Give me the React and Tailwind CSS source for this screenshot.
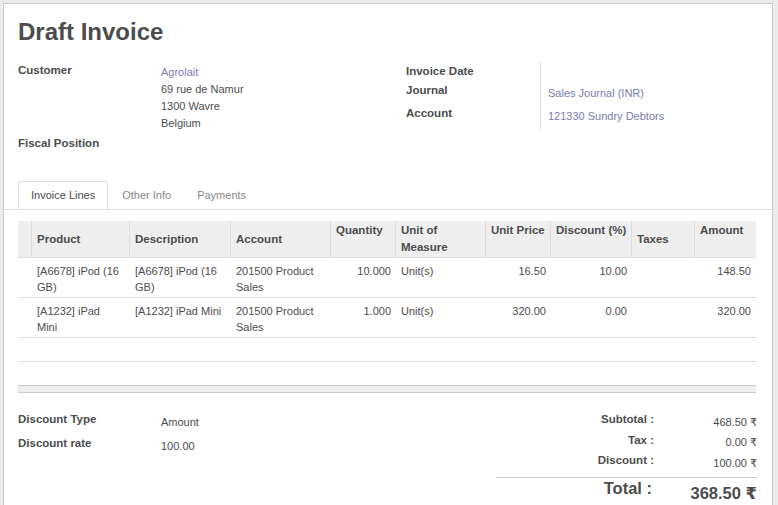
const font = { fontFamily: '"Liberation Sans", "DejaVu Sans", Arial, sans-serif' };

const columns = [
  { key: 'handle', label: '', width: 'w-[13px]' },
  { key: 'product', label: 'Product', width: 'w-[98px]', middle: true },
  { key: 'description', label: 'Description', width: 'w-[101px]', middle: true },
  { key: 'account', label: 'Account', width: 'w-[100px]', middle: true },
  { key: 'quantity', label: 'Quantity', width: 'w-[65px]', right: true },
  { key: 'uom', label: 'Unit of Measure', width: 'w-[90px]', wrap: true },
  { key: 'price', label: 'Unit Price', width: 'w-[65px]', right: true },
  { key: 'discount', label: 'Discount (%)', width: 'w-[81px]', right: true },
  { key: 'taxes', label: 'Taxes', width: 'w-[63px]', middle: true },
  { key: 'amount', label: 'Amount', width: 'w-[61px]', right: true },
];

const lines = [
  {
    product: '[A6678] iPod (16 GB)',
    description: '[A6678] iPod (16 GB)',
    account: '201500 Product Sales',
    quantity: '10.000',
    uom: 'Unit(s)',
    price: '16.50',
    discount: '10.00',
    taxes: '',
    amount: '148.50',
  },
  {
    product: '[A1232] iPad Mini',
    description: '[A1232] iPad Mini',
    account: '201500 Product Sales',
    quantity: '1.000',
    uom: 'Unit(s)',
    price: '320.00',
    discount: '0.00',
    taxes: '',
    amount: '320.00',
  },
];

function HeaderCell({ col, first }) {
  return (
    <div
      className={`${col.width} shrink-0 flex ${col.middle ? 'items-center' : 'items-start pt-[1px]'} ${
        first ? '' : 'border-l border-[#dcdcdc]'
      } ${col.wrap ? '' : 'whitespace-nowrap'} px-[5px] text-[11.5px] font-bold leading-[17px]`}
    >
      {col.label}
    </div>
  );
}

function LineRow({ line }) {
  return (
    <div className="flex border-b border-[#dcdcdc] pt-[5px] pb-[2px] text-[11px] leading-[16px]">
      {columns.map((col) => (
        <div
          key={col.key}
          className={`${col.width} shrink-0 ${col.right ? 'text-right pr-[4px] pl-[6px]' : 'px-[6px]'}`}
        >
          {col.key === 'handle' ? '' : line[col.key]}
        </div>
      ))}
    </div>
  );
}

function TotalRow({ label, value, h, valuePad }) {
  return (
    <div className={`flex ${h}`}>
      <div className="w-[160px] text-right pr-[2px] text-[11.5px] font-bold leading-[17px]">{label}</div>
      <div className={`w-[101px] text-right text-[11px] leading-[17px] ${valuePad}`}>{value}</div>
    </div>
  );
}

export default function App() {
  return (
    <div className="min-h-[505px] bg-[#ebebeb] pl-[3px] pt-[3px] overflow-hidden" style={font}>
      <div className="w-[770px] h-[520px] bg-white border border-[#cbcad4] text-[#4c4c4c]">
        {/* header */}
        <div className="pl-[14px] pr-[16px] pt-[14px]">
          <h1 className="text-[24px] font-bold leading-[28px] text-[#4c4c4c]">Draft Invoice</h1>

          <div className="flex mt-[16px]">
            <div className="w-[388px] flex flex-col">
              <div className="flex">
                <div className="w-[143px] text-[11.5px] font-bold leading-[17px]">Customer</div>
                <div className="pt-[2px] text-[11px] leading-[17px]">
                  <div className="text-[#7c7bad]">Agrolait</div>
                  <div>69 rue de Namur</div>
                  <div>1300 Wavre</div>
                  <div>Belgium</div>
                </div>
              </div>
              <div className="mt-[3px] text-[11.5px] font-bold leading-[17px]">Fiscal Position</div>
            </div>

            <div className="flex">
              <div className="w-[134px] flex flex-col text-[11.5px] font-bold leading-[17px]">
                <div className="h-[20px] pt-[1px]">Invoice Date</div>
                <div className="h-[23px]">Journal</div>
                <div className="h-[24px]">Account</div>
              </div>
              <div className="h-[67px] border-l border-[#dcdcdc] pl-[7px] flex flex-col text-[11px] leading-[17px] text-[#7c7bad]">
                <div className="h-[20px]"></div>
                <div className="h-[23px] pt-[3px]">Sales Journal (INR)</div>
                <div className="h-[24px] pt-[3px]">121330 Sundry Debtors</div>
              </div>
            </div>
          </div>
        </div>

        {/* tabs */}
        <div className="mt-[29px] flex gap-[2px] pl-[14px] border-b border-[#dcdcdc] text-[11px]">
          <div className="h-[28px] -mb-[1px] px-[12px] flex items-center bg-white border border-b-0 border-[#dcdcdc] rounded-t-[3px] text-[#4c4c4c]">
            Invoice Lines
          </div>
          <div className="h-[28px] px-[12px] flex items-center text-[#888888]">Other Info</div>
          <div className="h-[28px] px-[12px] flex items-center text-[#888888]">Payments</div>
        </div>

        {/* lines table */}
        <div className="pl-[14px] pr-[16px] pt-[11px]">
          <div className="flex h-[37px] bg-[#eeeeee] border-b border-[#dcdcdc]">
            {columns.map((col, i) => (
              <HeaderCell key={col.key} col={col} first={i === 0} />
            ))}
          </div>
          {lines.map((line, i) => (
            <LineRow key={i} line={line} />
          ))}
          <div className="h-[24px] border-b border-[#dcdcdc]"></div>
          <div className="mt-[23px] h-[8px] bg-[#eeeeee] border-y border-[#cccccc]"></div>
        </div>

        {/* footer */}
        <div className="flex justify-between pl-[14px] pr-[15px] mt-[18px]">
          <div className="flex flex-col">
            <div className="flex h-[24px]">
              <div className="w-[143px] text-[11.5px] font-bold leading-[17px]">Discount Type</div>
              <div className="pt-[3px] text-[11px] leading-[17px]">Amount</div>
            </div>
            <div className="flex h-[24px]">
              <div className="w-[143px] text-[11.5px] font-bold leading-[17px]">Discount rate</div>
              <div className="pt-[3px] text-[11px] leading-[17px]">100.00</div>
            </div>
          </div>

          <div className="w-[261px] flex flex-col">
            <TotalRow label="Subtotal :" value="468.50 ₹" h="h-[21px]" valuePad="pt-[3px]" />
            <TotalRow label="Tax :" value="0.00 ₹" h="h-[20px]" valuePad="pt-[2px]" />
            <TotalRow label="Discount :" value="100.00 ₹" h="h-[20px]" valuePad="pt-[3px]" />
            <div className="mt-[5px] border-t border-[#cccccc] flex">
              <div className="w-[160px] text-right pr-[4px] text-[16.5px] font-bold leading-[20px]">
                Total :
              </div>
              <div className="w-[101px] text-right text-[16.5px] font-bold leading-[20px] pt-[5px]">
                368.50 ₹
              </div>
            </div>
          </div>
        </div>
      </div>
    </div>
  );
}
